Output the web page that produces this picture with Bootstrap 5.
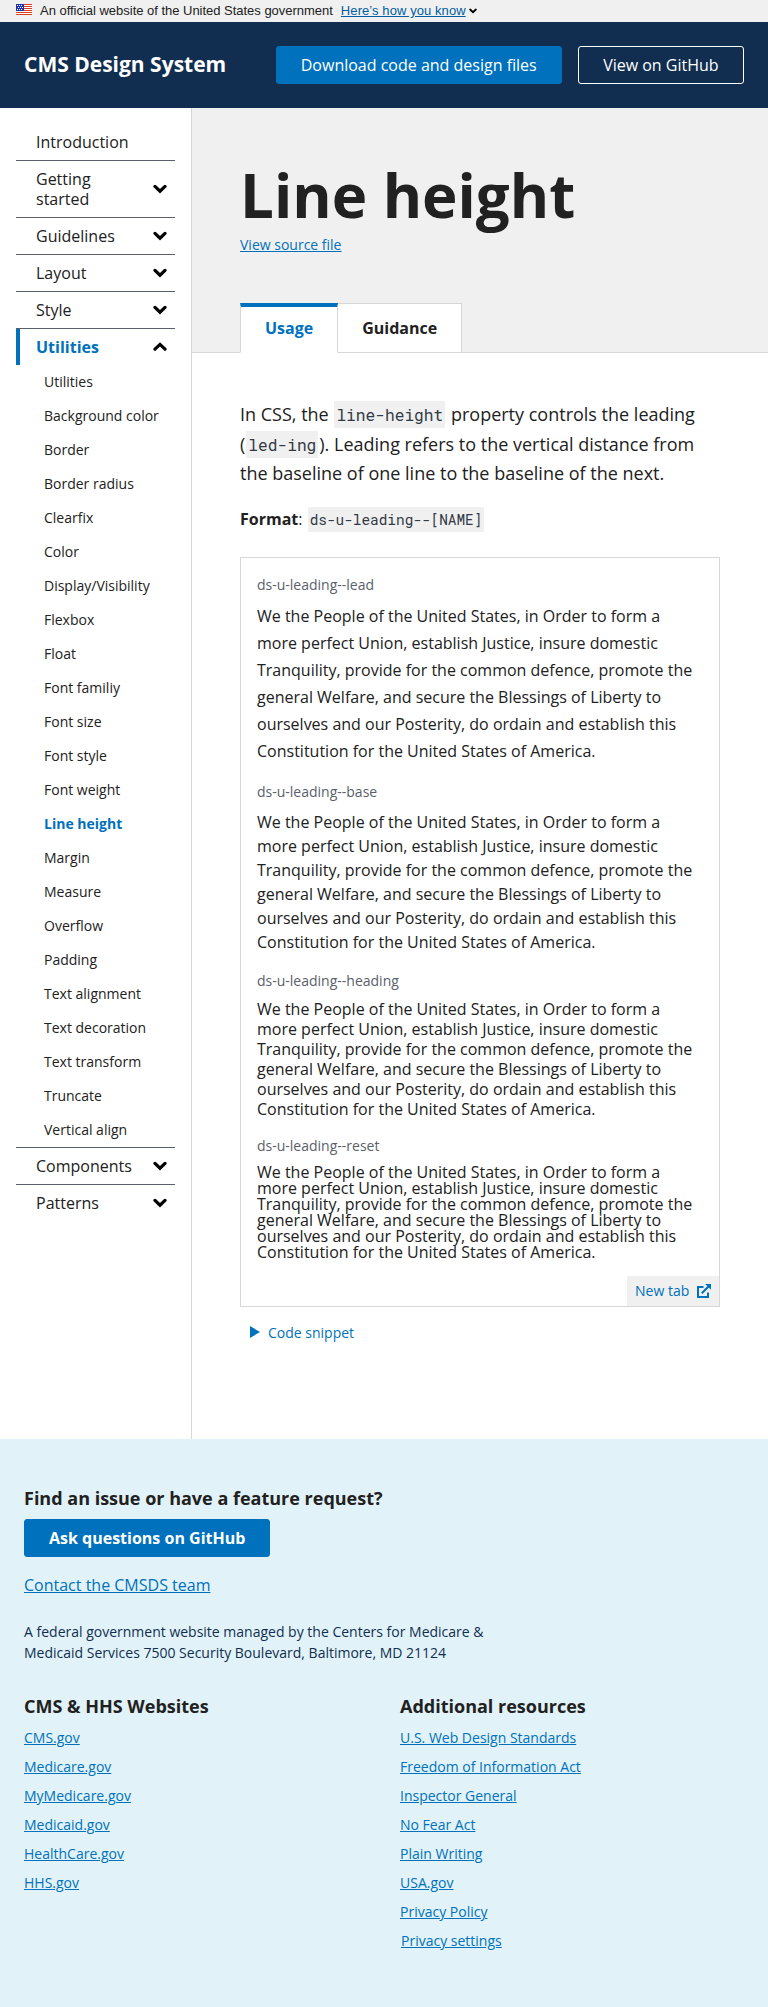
<!DOCTYPE html>
<html lang="en">
<head>
<meta charset="utf-8">
<title>Line height - CMS Design System</title>
<link href="https://cdn.jsdelivr.net/npm/bootstrap@5.3.0/dist/css/bootstrap.min.css" rel="stylesheet">
<style>
body{font-family:"Open Sans",sans-serif;font-size:16px;color:#212121;line-height:1.5}
a{color:#0071bc}
.usa{height:22px;background:#f0f0f0;font:13px/22px "Liberation Sans",sans-serif;padding-left:16px;color:#212121;overflow:hidden}
.usa .flag{margin:4px 8px 0 0}
.usa .official{letter-spacing:-.02px}
.usa a{color:#005ea2;margin-left:8px;letter-spacing:.08px}
.usa .caret{margin:8px 0 0 3px}
.top{height:86px;background:#112e51;padding:0 24px}
.brand{font-size:21px;font-weight:700;color:#fff}
.cbtn{height:38px;line-height:36px;padding:0 24px;border:1px solid #0071bc;border-radius:3px;background:#0071bc;color:#fff;font-size:16px;text-decoration:none;display:inline-block}
.cbtn.hollow{background:none;border-color:#fff;padding:0 24.4px}
.page{height:1331px}
.side{width:192px;border-right:1px solid #d6d7d9;padding:16px 16px 0 16px}
.side>ul>li+li{border-top:1px solid #5a5f6b}
.lvl{min-height:36px;padding:8px 8px 8px 20px;line-height:20px}
.lvl span{width:84px}
.lvl.on{color:#0071bc;font-weight:700;border-left:4px solid #0071bc;padding-left:16px}
.subs li{height:34px;line-height:34px;font-size:14px;padding-left:28px;white-space:nowrap}
.subs .on{color:#0071bc;font-weight:700}
.hero{height:245px;background:#f0f0f0;border-bottom:1px solid #d6d7d9;padding:48px 48px 0}
.hero h1{font-size:60px;line-height:78px;font-weight:700;margin:0}
.src{font-size:14px;line-height:21px}
.tabs{margin-top:48px;font-weight:700}
.tabs div{height:50px;border:1px solid #d6d7d9;border-left:0;background:#fff;padding:0 24px;line-height:48px}
.tabs .on{border-left:1px solid #d6d7d9;border-top:4px solid #0071bc;border-bottom-color:#fff;color:#0071bc;line-height:42px}
.body-pad{padding:47px 48px 0}
.intro{font-size:18px;line-height:29.6px;margin:0}
code{font-family:"Roboto Mono","Liberation Mono",monospace;font-size:.9em;line-height:1;color:#323a45;background:#f0f0f0;padding:3px 2px;margin:0 1px}
.fmt{margin-top:18.2px;height:24px}
.demo{height:750px;border:1px solid #d6d7d9;padding:16px 16px 0;margin-top:26px;position:relative}
.lbl{font-size:14px;line-height:21px;color:#5a5f6b}
.demo p{margin:8px 0 16px;white-space:nowrap}
.lh-27{line-height:27px}.lh-24{line-height:24px}.lh-20{line-height:20px}.lh-16{line-height:16px}
.newtab{position:absolute;right:0;bottom:0;width:92px;height:30px;background:#f0f0f0;font-size:14px;line-height:30px;padding-left:8px;color:#0071bc}
.snip{font-size:14px;line-height:21px;color:#0071bc;margin-top:15px;padding-left:10px}
.foot{height:568px;background:#e1f3f8;padding:48px 24px 0}
.foot h2{font-size:18px;line-height:23px;font-weight:700;margin:0}
.foot .ask{margin-top:9px}
.fed{font-size:14px;line-height:21px;color:#112e51;margin:24px 0 32px}
.links{margin-top:9px}
.links li{font-size:14px;line-height:21px;margin-bottom:8px}
.col-left{width:376px}
.indent{padding-left:1px}
</style>
</head>
<body>
<svg width="0" height="0" class="position-absolute"><defs><g id="chev"><path d="M2 2.4 7 7.2 12 2.4" fill="none" stroke="#000" stroke-width="3.2" stroke-linecap="round"/></g></defs></svg>
<div class="usa d-flex align-items-start">
<svg class="flag" width="16" height="11" viewBox="0 0 16 11"><path fill="#fff" d="M0 0h16v11H0z"/><path stroke="#db3e1f" d="M0 .5h16M0 2.5h16M0 4.5h16M0 6.5h16M0 8.5h16M0 10.5h16"/><path fill="#1e33b1" d="M0 0h8v7H0z"/><path stroke="#fff" stroke-dasharray="1 1" d="M1 1.5h6M2 3.5h5M1 5.5h6"/></svg>
<span class="official">An official website of the United States government</span><a href="#">Here’s how you know</a><svg class="caret" width="8" height="6" viewBox="0 0 14 10"><use href="#chev"/></svg>
</div>
<header class="top d-flex align-items-center"><div class="brand me-auto">CMS Design System</div><a class="cbtn" href="#">Download code and design files</a><a class="cbtn hollow ms-3" href="#">View on GitHub</a></header>
<div class="page d-flex">
<nav class="side flex-shrink-0"><ul class="list-unstyled m-0">
<li><div class="lvl">Introduction</div></li>
<li><div class="lvl d-flex justify-content-between align-items-center"><span>Getting started</span><svg width="14" height="10"><use href="#chev"/></svg></div></li>
<li><div class="lvl d-flex justify-content-between align-items-center"><span>Guidelines</span><svg width="14" height="10"><use href="#chev"/></svg></div></li>
<li><div class="lvl d-flex justify-content-between align-items-center"><span>Layout</span><svg width="14" height="10"><use href="#chev"/></svg></div></li>
<li><div class="lvl d-flex justify-content-between align-items-center"><span>Style</span><svg width="14" height="10"><use href="#chev"/></svg></div></li>
<li><div class="lvl on d-flex justify-content-between align-items-center"><span>Utilities</span><svg width="14" height="10"><use href="#chev" transform="matrix(1 0 0 -1 0 9.6)"/></svg></div>
<ul class="list-unstyled subs"><li>Utilities</li><li>Background color</li><li>Border</li><li>Border radius</li><li>Clearfix</li><li>Color</li><li>Display/Visibility</li><li>Flexbox</li><li>Float</li><li>Font familiy</li><li>Font size</li><li>Font style</li><li>Font weight</li><li class="on">Line height</li><li>Margin</li><li>Measure</li><li>Overflow</li><li>Padding</li><li>Text alignment</li><li>Text decoration</li><li>Text transform</li><li>Truncate</li><li>Vertical align</li></ul></li>
<li><div class="lvl d-flex justify-content-between align-items-center"><span>Components</span><svg width="14" height="10"><use href="#chev"/></svg></div></li>
<li><div class="lvl d-flex justify-content-between align-items-center"><span>Patterns</span><svg width="14" height="10"><use href="#chev"/></svg></div></li>
</ul></nav>
<main class="flex-grow-1">
<div class="hero"><h1>Line height</h1><div class="src"><a href="#">View source file</a></div>
<div class="tabs d-flex"><div class="on">Usage</div><div>Guidance</div></div></div>
<div class="body-pad">
<p class="intro text-nowrap">In CSS, the <code>line-height</code> property controls the leading<br>(<code>led-ing</code>). Leading refers to the vertical distance from<br>the baseline of one line to the baseline of the next.</p>
<div class="fmt"><b>Format</b>: <code>ds-u-leading--[NAME]</code></div>
<div class="demo">
<div class="lbl">ds-u-leading--lead</div>
<p class="lh-27">We the People of the United States, in Order to form a<br>more perfect Union, establish Justice, insure domestic<br>Tranquility, provide for the common defence, promote the<br>general Welfare, and secure the Blessings of Liberty to<br>ourselves and our Posterity, do ordain and establish this<br>Constitution for the United States of America.</p>
<div class="lbl">ds-u-leading--base</div>
<p class="lh-24">We the People of the United States, in Order to form a<br>more perfect Union, establish Justice, insure domestic<br>Tranquility, provide for the common defence, promote the<br>general Welfare, and secure the Blessings of Liberty to<br>ourselves and our Posterity, do ordain and establish this<br>Constitution for the United States of America.</p>
<div class="lbl">ds-u-leading--heading</div>
<p class="lh-20">We the People of the United States, in Order to form a<br>more perfect Union, establish Justice, insure domestic<br>Tranquility, provide for the common defence, promote the<br>general Welfare, and secure the Blessings of Liberty to<br>ourselves and our Posterity, do ordain and establish this<br>Constitution for the United States of America.</p>
<div class="lbl">ds-u-leading--reset</div>
<p class="lh-16">We the People of the United States, in Order to form a<br>more perfect Union, establish Justice, insure domestic<br>Tranquility, provide for the common defence, promote the<br>general Welfare, and secure the Blessings of Liberty to<br>ourselves and our Posterity, do ordain and establish this<br>Constitution for the United States of America.</p>
<div class="newtab d-flex align-items-center">New tab<svg class="ms-2" width="14" height="14" viewBox="0 0 14 14" fill="none" stroke="#0071bc" stroke-width="2"><path d="M6.5 3H1v10h10V8.5M4.8 9.2 11.5 2.5"/><path d="M8.2 0H14v5.8z" fill="#0071bc" stroke="none"/></svg></div>
</div>
<div class="snip"><svg width="10" height="12" class="align-baseline me-2"><path d="M0 0 10 6 0 12z" fill="#0071bc"/></svg>Code snippet</div>
</div></main></div>
<footer class="foot"><h2>Find an issue or have a feature request?</h2>
<a class="cbtn ask fw-bold" href="#">Ask questions on GitHub</a>
<div class="mt-3"><a href="#">Contact the CMSDS team</a></div>
<p class="fed">A federal government website managed by the Centers for Medicare &amp;<br>Medicaid Services 7500 Security Boulevard, Baltimore, MD 21124</p>
<div class="d-flex"><div class="col-left"><h2>CMS &amp; HHS Websites</h2><ul class="links list-unstyled"><li><a href="#">CMS.gov</a></li><li><a href="#">Medicare.gov</a></li><li><a href="#">MyMedicare.gov</a></li><li><a href="#">Medicaid.gov</a></li><li><a href="#">HealthCare.gov</a></li><li><a href="#">HHS.gov</a></li></ul></div>
<div><h2>Additional resources</h2><ul class="links list-unstyled"><li><a href="#">U.S. Web Design Standards</a></li><li><a href="#">Freedom of Information Act</a></li><li><a href="#">Inspector General</a></li><li><a href="#">No Fear Act</a></li><li><a href="#">Plain Writing</a></li><li><a href="#">USA.gov</a></li><li><a href="#">Privacy Policy</a></li><li class="indent"><a href="#">Privacy settings</a></li></ul></div></div>
</footer>
<script src="https://cdn.jsdelivr.net/npm/bootstrap@5.3.0/dist/js/bootstrap.bundle.min.js"></script>
</body></html>
